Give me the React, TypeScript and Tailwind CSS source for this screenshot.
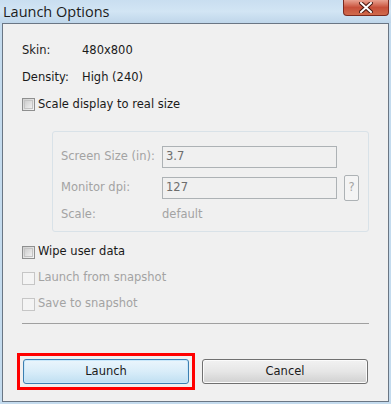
import React from "react";

const font = { fontFamily: '"DejaVu Sans", Tahoma, sans-serif' };

function Checkbox({ disabled }: { disabled?: boolean }) {
  return (
    <div
      className={
        "w-[13px] h-[13px] border shrink-0 " +
        (disabled
          ? "border-[#c6c6c6] bg-[#f4f4f4]"
          : "border-[#8e8f8f] bg-gradient-to-br from-[#d0d0d0] to-[#f5f5f5]")
      }
    >
      {!disabled && <div className="m-[1px] w-[9px] h-[9px] border border-[#c4c4c4] bg-gradient-to-br from-[#cfcfcf] to-[#f0f0f0]" />}
    </div>
  );
}

function CheckRow({ label, disabled }: { label: string; disabled?: boolean }) {
  return (
    <div className="h-[26px] flex items-center pl-[19px] gap-[3px]">
      <Checkbox disabled={disabled} />
      <span className={disabled ? "text-[#a3a3a3]" : "text-[#1a1a1a]"}>{label}</span>
    </div>
  );
}

export default function App() {
  return (
    <div className="w-[391px] h-[404px] bg-[#c4dbee] relative overflow-hidden text-[11.5px]" style={font}>
      {/* Title bar */}
      <div className="h-[23px] flex items-start bg-gradient-to-b from-[#c9def0] via-[#d2e5f4] to-[#bfd6ea]">
        <span className="pl-[3px] pt-[1px] text-[14.5px] text-[#1c1c1c]" style={{ fontFamily: '"Open Sans", "Noto Sans", sans-serif' }}>
          Launch Options
        </span>
        <div className="ml-auto mr-[2px] w-[46px] h-[16px] rounded-b-[4px] border border-t-0 border-[#7a2a20] bg-gradient-to-b from-[#e8a291] via-[#c7503a] to-[#d06a4c] flex items-center justify-center">
          <svg width="14" height="11" viewBox="0 0 14 11">
            <path d="M2 1 L12 10 M12 1 L2 10" stroke="#4a1810" strokeWidth="4" strokeLinecap="square" />
            <path d="M2 1 L12 10 M12 1 L2 10" stroke="#ffffff" strokeWidth="2" strokeLinecap="square" />
          </svg>
        </div>
      </div>

      {/* Client */}
      <div className="ml-[2px] w-[387px] h-[379px] border border-[#6a7684] bg-[#f0f0f0] flex flex-col">
        <div className="h-[13px]" />
        <div className="h-[27px] flex items-center pl-[19px] text-[#1a1a1a]">
          <span className="w-[60px]">Skin:</span>
          <span>480x800</span>
        </div>
        <div className="h-[27px] flex items-center pl-[19px] text-[#1a1a1a]">
          <span className="w-[60px]">Density:</span>
          <span>High (240)</span>
        </div>
        <div className="h-[27px] flex items-center pl-[19px] gap-[3px]">
          <Checkbox />
          <span className="text-[#1a1a1a]">Scale display to real size</span>
        </div>

        {/* Group box */}
        <div className="mt-[13px] ml-[49px] w-[317px] h-[101px] border border-[#d9e2e8] rounded-[3px] pt-[14px] pl-[8px] text-[#a3a3a3]">
          <div className="h-[22px] flex items-center">
            <span className="w-[101px]">Screen Size (in):</span>
            <div className="w-[175px] h-[22px] border border-[#adb2b5] bg-[#f0f0f0] flex items-center pl-[3px] text-[#6d6d6d]">3.7</div>
          </div>
          <div className="mt-[7px] h-[26px] flex items-center">
            <span className="w-[101px]">Monitor dpi:</span>
            <div className="w-[175px] h-[22px] border border-[#adb2b5] bg-[#f0f0f0] flex items-center pl-[3px] text-[#6d6d6d]">127</div>
            <div className="ml-[7px] w-[15px] h-[26px] border border-[#adb2b5] rounded-[2px] bg-[#f4f4f4] flex items-center justify-center text-[#a3a3a3]">?</div>
          </div>
          <div className="mt-[4px] h-[20px] flex items-center">
            <span className="w-[101px]">Scale:</span>
            <span>default</span>
          </div>
        </div>

        <div className="mt-[7px]">
          <CheckRow label="Wipe user data" />
          <CheckRow label="Launch from snapshot" disabled />
          <CheckRow label="Save to snapshot" disabled />
        </div>

        <div className="mt-[6px] ml-[19px] w-[347px] h-px bg-[#a0a0a0]" />

        <div className="mt-[35px] ml-[20px] flex gap-[13px]">
          <div className="relative">
            <div className="w-[166px] h-[25px] rounded-[3px] border border-[#3c7fb1] bg-gradient-to-b from-[#eaf5fc] via-[#d9edf9] to-[#bfdff2] flex items-center justify-center text-[#1a1a1a] shadow-[inset_0_0_0_1px_#c9e8fb]">
              Launch
            </div>
            <div className="absolute left-[-6px] top-[-6px] w-[178px] h-[37px] border-[3px] border-[#ff0000]" />
          </div>
          <div className="w-[166px] h-[25px] rounded-[3px] border border-[#707070] bg-gradient-to-b from-[#f2f2f2] via-[#e6e6e6] to-[#d0d0d0] flex items-center justify-center text-[#1a1a1a] shadow-[inset_0_0_0_1px_#fbfbfb]">
            Cancel
          </div>
        </div>
      </div>
    </div>
  );
}
